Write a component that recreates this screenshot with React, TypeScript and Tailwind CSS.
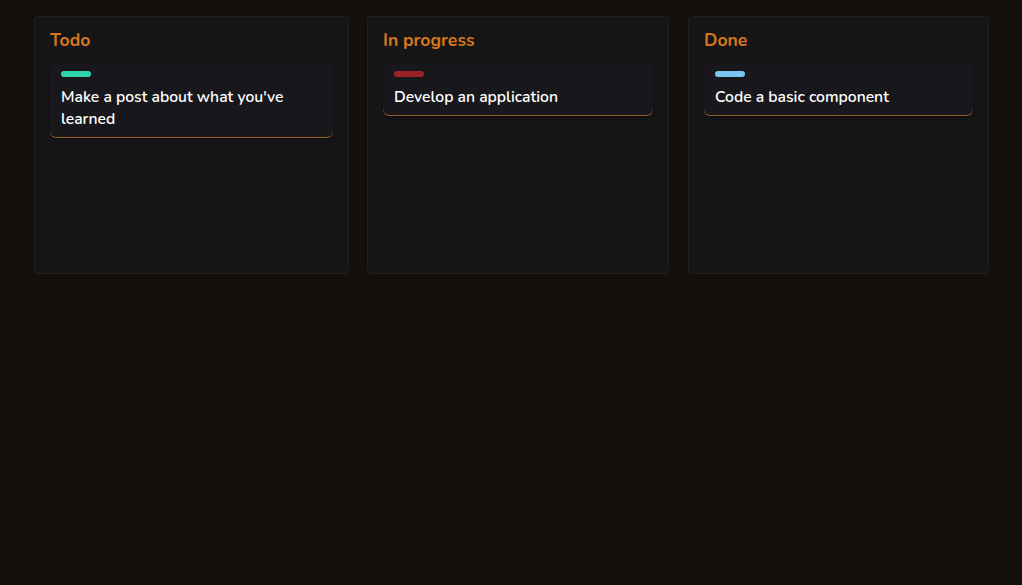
import React from "react";

type Task = { id: number; text: string; tag: string };

const columns: { title: string; width: string; tasks: Task[] }[] = [
  {
    title: "Todo",
    width: "w-[315px]",
    tasks: [{ id: 1, text: "Make a post about what you've learned", tag: "bg-[#2dd4aa]" }],
  },
  {
    title: "In progress",
    width: "w-[302px]",
    tasks: [{ id: 2, text: "Develop an application", tag: "bg-[#9b2226]" }],
  },
  {
    title: "Done",
    width: "w-[301px] ml-px",
    tasks: [{ id: 3, text: "Code a basic component", tag: "bg-[#7cc4f4]" }],
  },
];

export default function App() {
  return (
    <div
      className="min-h-[585px] w-full bg-[#130f0c] px-[34px] pt-4"
      style={{ fontFamily: "Nunito, Lato, 'Noto Sans', sans-serif" }}
    >
      <div className="flex items-start gap-[18px]">
        {columns.map((col) => (
          <section
            key={col.title}
            className={`${col.width} h-[258px] shrink-0 rounded-[3px] border border-[#251d17] bg-[#151518] px-[15px] pt-[11px]`}
          >
            <h2 className="mb-[11px] text-[17.6px] font-bold leading-6 text-[#d6761a]">{col.title}</h2>
            <div className="flex flex-col gap-3">
              {col.tasks.map((t) => (
                <div
                  key={t.id}
                  className="rounded-md bg-[#18181c] px-[11px] pb-[7px] pt-2 shadow-[0_1px_0_0_#9a5e27,0_2px_2px_0_rgba(0,0,0,0.45)]"
                >
                  <div className={`h-[6px] w-[30px] rounded-full ${t.tag}`} />
                  <p className="mt-[9px] text-[15.7px] font-semibold leading-[22px] text-white">{t.text}</p>
                </div>
              ))}
            </div>
          </section>
        ))}
      </div>
    </div>
  );
}
